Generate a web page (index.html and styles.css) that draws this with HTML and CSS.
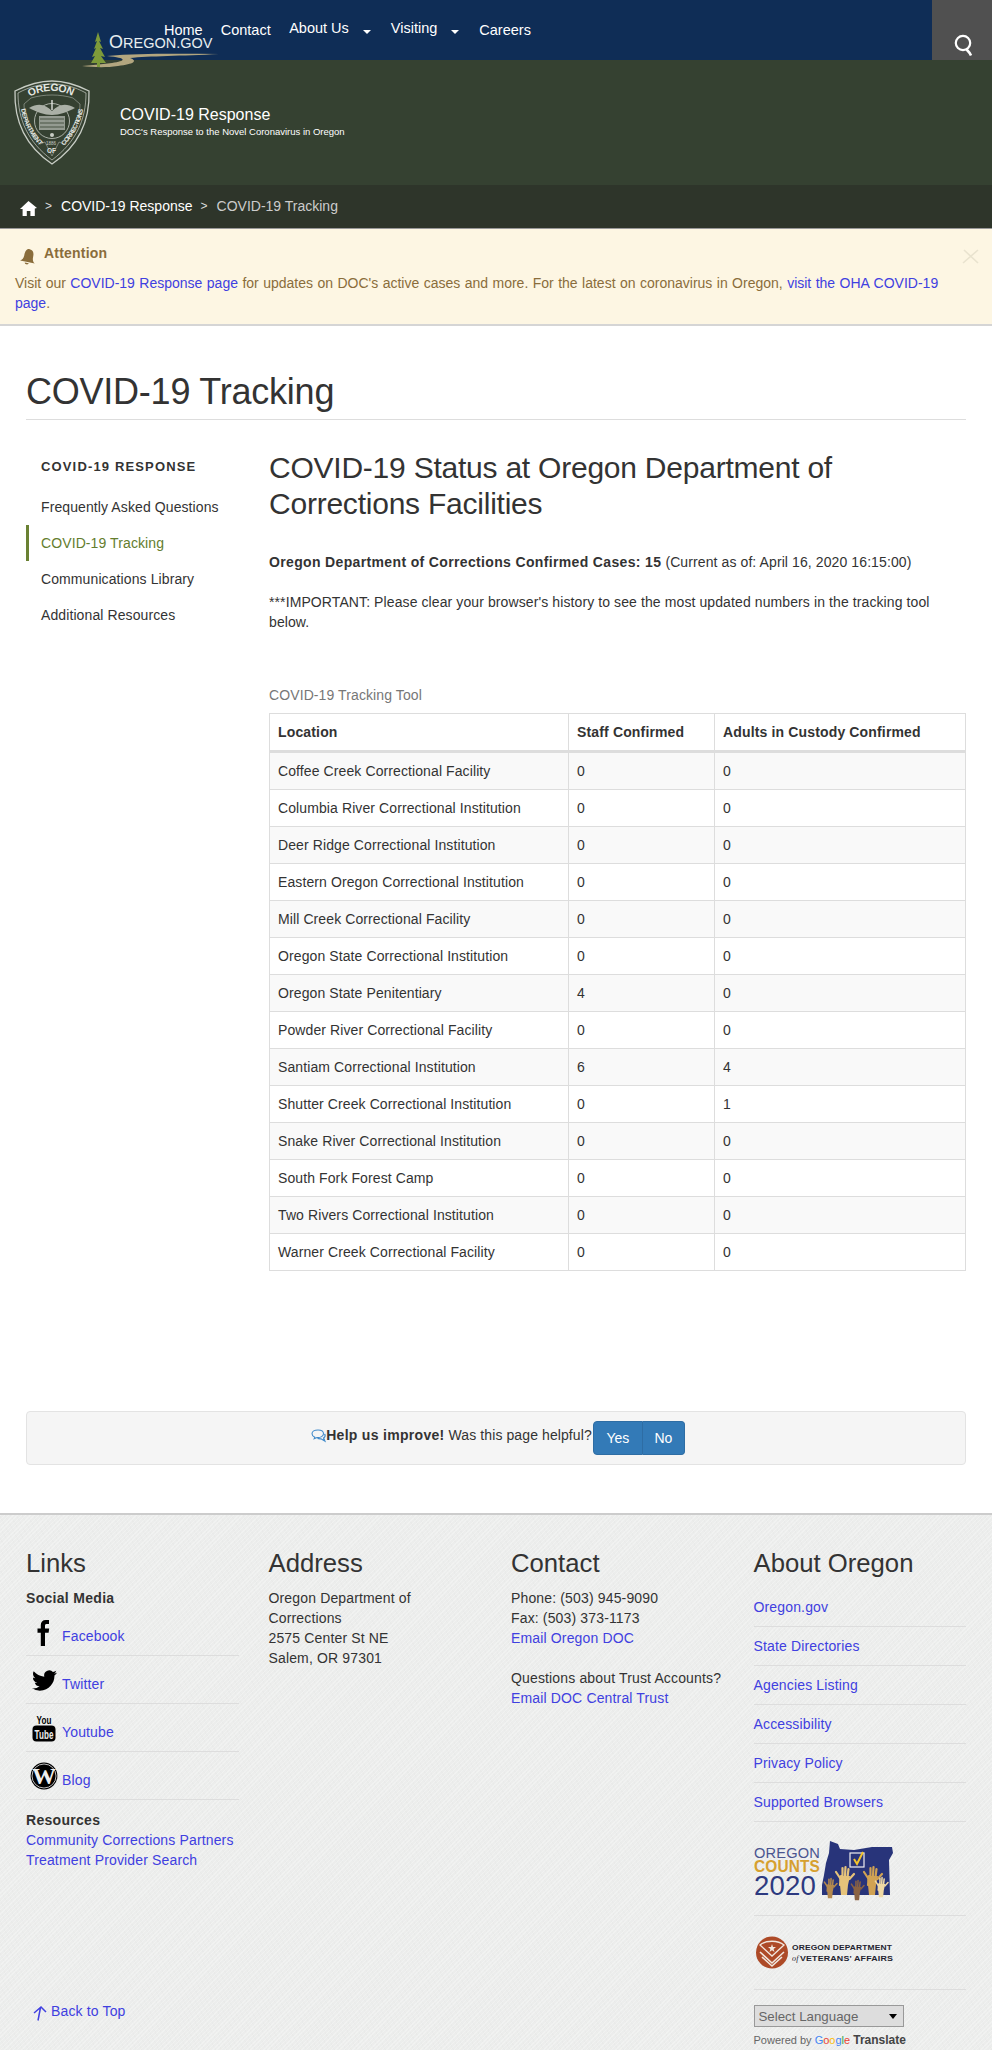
FILE: index.html
```html
<!DOCTYPE html>
<html>
<head>
<title>COVID-19 Tracking</title>
<meta name="viewport" content="width=device-width, initial-scale=1.0">
<link rel="stylesheet" href="styles.css">
</head>
<body>

<header class="topbar">
  <div class="logo">
    <svg class="logo-art" viewBox="0 0 137 36" width="137" height="36">
      <path d="M0 34 C12 33 22 32 30 31 C44 29 46 26 25 24 C60 21 100 22 137 22 C100 24 66 24 48 26 C56 29 52 32 36 34 C22 36 10 35 0 34Z" fill="#b3a67f"/>
      <path d="M16 0 L19 10 L17 9 L21 17 L18 16 L23 25 L19 24 L24 31 L18 31 L18 35 L15 35 L15 31 L9 31 L13 24 L10 25 L14 16 L12 17 L15 9 L13 10Z" fill="#7d9a3a"/>
    </svg>
    <span class="logo-text"><span class="logo-big">O</span>REGON.GOV</span>
  </div>
  <ul class="nav">
    <li class="nav-home"><a href="#">Home</a></li>
    <li class="nav-contact"><a href="#">Contact</a></li>
    <li class="nav-drop nav-about"><a href="#">About Us</a><i class="caret"></i></li>
    <li class="nav-drop nav-visiting"><a href="#">Visiting</a><i class="caret"></i></li>
    <li><a href="#">Careers</a></li>
  </ul>
  <div class="search-btn">
    <svg viewBox="0 0 20 22" width="20" height="22">
      <circle cx="9" cy="9" r="7.200" fill="none" stroke="#fff" stroke-width="2.200"/>
      <path d="M12.500 15.500 C14 17 15.500 18 17 21.500" fill="none" stroke="#fff" stroke-width="2.600"/>
    </svg>
  </div>
</header>

<section class="banner">
  <svg class="seal" viewBox="0 0 76 85" width="76" height="85">
    <defs>
      <path id="arc-top" d="M16 17 C28 9 48 9 60 17"/>
      <path id="arc-left" d="M7 29 C9 42 15 54 26 66"/>
      <path id="arc-right" d="M50 66 C61 54 67 42 69 29"/>
    </defs>
    <path d="M38 1 C51 1 63 5 75 11 C76 40 66 65 38 84 C10 65 0 40 1 11 C13 5 25 1 38 1Z" fill="none" stroke="#c8cdc5" stroke-width="1.300"/>
    <path d="M38 4 C50 4 61 7 72 13 C72 40 62 62 38 80 C14 62 4 40 4 13 C15 7 26 4 38 4Z" fill="none" stroke="#c8cdc5" stroke-width=".7"/>
    <path d="M10 24 L17 18 C30 14 46 14 59 18 L66 24 C66 42 60 54 50 64 L45 62 L38 76 L31 62 L26 64 C16 54 10 42 10 24Z" fill="none" stroke="#aab0a6" stroke-width=".6"/>
    <text class="seal-text seal-big"><textPath href="#arc-top" textLength="44" startOffset="0">OREGON</textPath></text>
    <text class="seal-text"><textPath href="#arc-left" textLength="42">DEPARTMENT</textPath></text>
    <text class="seal-text"><textPath href="#arc-right" textLength="42">CORRECTIONS</textPath></text>
    <text class="seal-text" x="33" y="73">OF</text>
    <text class="seal-year" x="32" y="65">1886</text>
    <circle cx="38" cy="41" r="17.500" fill="none" stroke="#c8cdc5" stroke-width=".8"/>
    <path d="M15 28 C25 22 32 25 38 31 C44 25 51 22 61 28 C53 32 46 35 38 35 C30 35 23 32 15 28Z" fill="#aab0a6"/>
    <rect x="25" y="36" width="26" height="14" fill="#c8cdc5" opacity=".65"/>
    <path d="M26 39 H50 M26 43 H50 M26 47 H50" stroke="#354131" stroke-width=".8"/>
    <path d="M38 20 V30" stroke="#dfe2dd" stroke-width="1.400"/>
    <circle cx="38" cy="55" r="2" fill="#c8cdc5"/>
  </svg>
  <div class="banner-text">
    <div class="banner-title">COVID-19 Response</div>
    <div class="banner-sub">DOC's Response to the Novel Coronavirus in Oregon</div>
  </div>
</section>

<nav class="crumbs">
  <svg class="home-icon" viewBox="0 0 17 15" width="17" height="15">
    <path d="M8.500 0 L17 7 L14.800 7.400 L14.800 15 L10.400 15 L10.400 10 L6.800 10 L6.800 15 L2.600 15 L2.600 8 L0 8Z" fill="#fff"/>
  </svg>
  <span class="crumb-sep">&gt;</span>
  <a class="crumb-link" href="#">COVID-19 Response</a>
  <span class="crumb-sep">&gt;</span>
  <span class="crumb-now">COVID-19 Tracking</span>
</nav>

<section class="alert">
  <span class="alert-close">
    <svg viewBox="0 0 17 15" width="17" height="15"><path d="M1 14 L16 1 M2 1 L16 14" stroke="#e9e3cf" stroke-width="1.600"/></svg>
  </span>
  <div class="alert-head">
    <svg viewBox="0 0 16 18" width="16" height="18">
      <g transform="rotate(12 8 9)"><path d="M8 1 C12 1 13 4 13 8 C13 11 14 13 16 14 L1 14 C3 13 4 11 4 8 C4 4 5 1 8 1Z M6 15 H10 C10 17 6 17 6 15Z" fill="#8a6d3b"/></g>
    </svg>
    <strong>Attention</strong>
  </div>
  <p>Visit our <a href="#">COVID-19 Response page</a> for updates on DOC's active cases and more. For the latest on coronavirus in Oregon, <a href="#">visit the OHA COVID-19 page</a>.</p>
</section>

<main class="page">
  <h1 class="page-title">COVID-19 Tracking</h1>
  <div class="layout">
    <aside class="side">
      <h4>COVID-19 Response</h4>
      <ul>
        <li><a href="#">Frequently Asked Questions</a></li>
        <li class="active"><a href="#">COVID-19 Tracking</a></li>
        <li><a href="#">Communications Library</a></li>
        <li><a href="#">Additional Resources</a></li>
      </ul>
    </aside>
    <article class="content">
      <h2>COVID-19 Status at Oregon Department of Corrections Facilities</h2>
      <p class="cases"><strong>Oregon Department of Corrections Confirmed Cases: 15</strong> (Current as of: April 16, 2020 16:15:00)</p>
      <p class="important">***IMPORTANT: Please clear your browser's history to see the most updated numbers in the tracking tool below.</p>
      <table class="tracker">
        <caption>COVID-19 Tracking Tool</caption>
        <colgroup><col class="col-a"><col class="col-b"><col></colgroup>
        <thead>
          <tr><th>Location</th><th>Staff Confirmed</th><th>Adults in Custody Confirmed</th></tr>
        </thead>
        <tbody>
          <tr><td>Coffee Creek Correctional Facility</td><td>0</td><td>0</td></tr>
          <tr><td>Columbia River Correctional Institution</td><td>0</td><td>0</td></tr>
          <tr><td>Deer Ridge Correctional Institution</td><td>0</td><td>0</td></tr>
          <tr><td>Eastern Oregon Correctional Institution</td><td>0</td><td>0</td></tr>
          <tr><td>Mill Creek Correctional Facility</td><td>0</td><td>0</td></tr>
          <tr><td>Oregon State Correctional Institution</td><td>0</td><td>0</td></tr>
          <tr><td>Oregon State Penitentiary</td><td>4</td><td>0</td></tr>
          <tr><td>Powder River Correctional Facility</td><td>0</td><td>0</td></tr>
          <tr><td>Santiam Correctional Institution</td><td>6</td><td>4</td></tr>
          <tr><td>Shutter Creek Correctional Institution</td><td>0</td><td>1</td></tr>
          <tr><td>Snake River Correctional Institution</td><td>0</td><td>0</td></tr>
          <tr><td>South Fork Forest Camp</td><td>0</td><td>0</td></tr>
          <tr><td>Two Rivers Correctional Institution</td><td>0</td><td>0</td></tr>
          <tr><td>Warner Creek Correctional Facility</td><td>0</td><td>0</td></tr>
        </tbody>
      </table>
    </article>
  </div>

  <div class="feedback">
    <svg class="chat-icon" viewBox="0 0 15 13" width="15" height="13">
      <path d="M7 1 C3.500 1 1 2.600 1 4.800 C1 6.400 2.200 7.500 3.800 8.200 L3.200 9.800 L6 8.600 C9.800 8.800 12.500 7 12.500 4.800 C12.500 2.600 10.300 1 7 1Z" fill="none" stroke="#428bca" stroke-width="1.100"/>
      <path d="M13.500 5 C14.600 6.400 14.200 8 12.600 9 L13.800 12 L10 9.800 C8.600 9.900 7.600 9.800 6.600 9.400" fill="none" stroke="#428bca" stroke-width="1.300"/>
    </svg>
    <span class="feedback-text"><strong>Help us improve!</strong> Was this page helpful?</span>
    <div class="btn-group">
      <button class="btn btn-yes">Yes</button><button class="btn btn-no">No</button>
    </div>
  </div>
</main>

<footer class="footer">
  <div class="footer-col">
    <h3>Links</h3>
    <strong class="foot-label">Social Media</strong>
    <ul class="social">
      <li>
        <span class="social-icon">
          <svg viewBox="0 0 28 28" width="28" height="28"><path d="M19 2 H15.800 C12.600 2 10.800 4 10.800 7.200 V10.500 H7.500 V14.800 H10.800 V28 H15 V14.800 H18.600 L19.200 10.500 H15 V7.600 C15 6.500 15.500 6 16.600 6 H19Z" fill="#000"/></svg>
        </span>
        <a href="#">Facebook</a>
      </li>
      <li>
        <span class="social-icon">
          <svg viewBox="0 0 24 24" width="25" height="25"><path d="M23.953 4.570a10 10 0 01-2.825.775 4.958 4.958 0 002.163-2.723c-.951.555-2.005.959-3.127 1.184a4.920 4.920 0 00-8.384 4.482C7.690 8.095 4.067 6.130 1.640 3.162a4.822 4.822 0 00-.666 2.475c0 1.710.870 3.213 2.188 4.096a4.904 4.904 0 01-2.228-.616v.060a4.923 4.923 0 003.946 4.827 4.996 4.996 0 01-2.212.085 4.936 4.936 0 004.604 3.417 9.867 9.867 0 01-6.102 2.105c-.390 0-.779-.023-1.170-.067a13.995 13.995 0 007.557 2.209c9.053 0 13.998-7.496 13.998-13.985 0-.210 0-.420-.015-.630A9.935 9.935 0 0024 4.590z" fill="#000"/></svg>
        </span>
        <a href="#">Twitter</a>
      </li>
      <li>
        <span class="social-icon">
          <svg viewBox="0 0 28 30" width="28" height="30">
            <text class="yt-you" x="14" y="11" text-anchor="middle" textLength="15" lengthAdjust="spacingAndGlyphs">You</text>
            <rect x="2.500" y="12.500" width="23" height="16" rx="4" fill="#000"/>
            <text class="yt-tube" x="14" y="25.500" text-anchor="middle" textLength="19" lengthAdjust="spacingAndGlyphs">Tube</text>
          </svg>
        </span>
        <a href="#">Youtube</a>
      </li>
      <li>
        <span class="social-icon">
          <svg viewBox="0 0 28 28" width="28" height="28">
            <circle cx="14" cy="14" r="13.400" fill="#000"/>
            <circle cx="14" cy="14" r="12" fill="none" stroke="#eee" stroke-width=".8"/>
            <text class="wp-w" x="14" y="22" text-anchor="middle">W</text>
          </svg>
        </span>
        <a href="#">Blog</a>
      </li>
    </ul>
    <strong class="foot-label res-label">Resources</strong>
    <a class="foot-link" href="#">Community Corrections Partners</a>
    <a class="foot-link" href="#">Treatment Provider Search</a>
    <a class="back-top" href="#">
      <svg viewBox="0 0 14 15" width="14" height="15"><path d="M1 7 L8 1 L13 6 M7.500 1.500 L5 14.500" fill="none" stroke="#4040e0" stroke-width="1.500"/></svg>
      Back to Top
    </a>
  </div>

  <div class="footer-col">
    <h3>Address</h3>
    <div>Oregon Department of Corrections<br>2575 Center St NE<br>Salem, OR 97301</div>
  </div>

  <div class="footer-col">
    <h3>Contact</h3>
    <div>Phone: (503) 945-9090<br>Fax: (503) 373-1173<br><a href="#">Email Oregon DOC</a></div>
    <div class="trust">Questions about Trust Accounts?<br><a href="#">Email DOC Central Trust</a></div>
  </div>

  <div class="footer-col">
    <h3>About Oregon</h3>
    <ul class="about-list">
      <li><a href="#">Oregon.gov</a></li>
      <li><a href="#">State Directories</a></li>
      <li><a href="#">Agencies Listing</a></li>
      <li><a href="#">Accessibility</a></li>
      <li><a href="#">Privacy Policy</a></li>
      <li><a href="#">Supported Browsers</a></li>
    </ul>
    <div class="badge-row counts">
      <svg viewBox="0 0 140 55" width="140" height="55">
        <defs>
          <g id="hand">
            <path d="M-4 6 L-3 -3 M-1.500 -3 L-1.500 -11 M1 -3 L1.500 -12 M3.500 -2 L4.500 -10 M5.500 0 L10 -5 M-4 -1 L-8 -7" fill="none" stroke-linecap="round" stroke-width="2.200"/>
            <path d="M-5 -3 H6 L4 6 L3 16 H-3 L-4 6Z" stroke="none"/>
          </g>
        </defs>
        <text class="counts-t1" x="0" y="17" textLength="66" lengthAdjust="spacingAndGlyphs">OREGON</text>
        <text class="counts-t2" x="0" y="31" textLength="66" lengthAdjust="spacingAndGlyphs">COUNTS</text>
        <text class="counts-t3" x="0" y="54" textLength="62" lengthAdjust="spacingAndGlyphs">2020</text>
        <path d="M76 0 L84 3 L86 8 L100 9 L118 6 L138 6 L139 12 L135 19 L136 54 L68 54 L68 44 L70 34 L72 22 L75 12Z" fill="#28347a"/>
        <rect x="96" y="12" width="14" height="14" fill="none" stroke="#eee" stroke-width="1.200"/>
        <path d="M100 18 L103 23 L109 11" fill="none" stroke="#f2c32c" stroke-width="2"/>
        <use href="#hand" transform="translate(90 38)" fill="#e6c37a" stroke="#e6c37a"/>
        <use href="#hand" transform="translate(118 38)" fill="#d1a253" stroke="#d1a253"/>
        <use href="#hand" transform="translate(76 46) scale(.7)" fill="#b58a4e" stroke="#b58a4e"/>
        <use href="#hand" transform="translate(103 48) scale(.7)" fill="#8a6242" stroke="#8a6242"/>
        <use href="#hand" transform="translate(127 45) scale(.7)" fill="#f0d9a4" stroke="#f0d9a4"/>
      </svg>
    </div>
    <div class="badge-row vets">
      <svg viewBox="0 0 137 33" width="137" height="33">
        <circle cx="16" cy="16.500" r="16" fill="#ad4a27"/>
        <path d="M4 9 C10 4 22 4 28 9 L16 20Z" fill="none" stroke="#f1e7de" stroke-width="1.300"/>
        <path d="M16 8 L17 11 L20 11 L17.600 13 L18.500 16 L16 14.200 L13.500 16 L14.400 13 L12 11 L15 11Z" fill="#f1e7de"/>
        <path d="M4 16 L16 27 L28 16 M6 21 L16 30 L26 21" fill="none" stroke="#f1e7de" stroke-width="1.600"/>
        <text class="vets-t" x="36" y="14" textLength="100" lengthAdjust="spacingAndGlyphs">OREGON DEPARTMENT</text>
        <text class="vets-of" x="36" y="25">of</text>
        <text class="vets-t" x="44" y="25" textLength="93" lengthAdjust="spacingAndGlyphs">VETERANS' AFFAIRS</text>
      </svg>
    </div>
    <div class="lang-wrap">
      <select class="lang"><option>Select Language</option></select>
    </div>
    <div class="powered">Powered by <span class="g-b">G</span><span class="g-r">o</span><span class="g-y">o</span><span class="g-b">g</span><span class="g-g">l</span><span class="g-r">e</span> <b>Translate</b></div>
  </div>
</footer>

</body>
</html>
```

FILE: styles.css
```css
* {
  box-sizing: border-box;
}

body {
  margin: 0;
  font-family: "Liberation Sans", Arial, sans-serif;
  font-size: 14px;
  line-height: 20px;
  letter-spacing: .1px;
  color: #333;
  background: #fff;
}

a {
  color: #4040e0;
  text-decoration: none;
}

ul {
  list-style: none;
  margin: 0;
  padding: 0;
}

strong {
  letter-spacing: .3px;
}

svg {
  overflow: visible;
}

/* top bar */
.topbar {
  position: relative;
  display: flex;
  justify-content: space-between;
  height: 60px;
  letter-spacing: 0;
  background: #0f2d56;
}

.logo {
  position: absolute;
  left: 82px;
  top: 32px;
  width: 137px;
  height: 36px;
  z-index: 2;
}

.logo-art {
  display: block;
}

.logo-text {
  position: absolute;
  left: 27px;
  top: 2px;
  color: #e8eef0;
  font-size: 14.5px;
  line-height: 16px;
  white-space: nowrap;
}

.logo-big {
  font-size: 18px;
}

.nav {
  display: flex;
  padding: 20px 0 0 164px;
  font-size: 14.5px;
}

.nav a {
  color: #fff;
}

.nav-home {
  margin-right: 18px;
}

.nav-contact {
  margin-right: 18.5px;
}

.nav-drop {
  margin-top: -2px;
}

.nav-about {
  margin-right: 20px;
}

.nav-visiting {
  margin-right: 20px;
}

.caret {
  display: inline-block;
  margin-left: 14px;
  vertical-align: -1px;
  border-top: 4px solid #fff;
  border-left: 4px solid transparent;
  border-right: 4px solid transparent;
}

.search-btn {
  display: flex;
  justify-content: center;
  align-items: flex-end;
  width: 60px;
  height: 60px;
  padding: 0 0 4px 4px;
  background: #505050;
}

/* section banner */
.banner {
  display: flex;
  align-items: center;
  height: 125px;
  padding: 0 14px;
  letter-spacing: 0;
  background: #354131;
}

.seal-text {
  fill: #e4e7e2;
  font-size: 6.5px;
  font-weight: bold;
}

.seal-big {
  font-size: 10.5px;
}

.seal-year {
  fill: #c8cdc5;
  font-size: 4.5px;
}

.banner-text {
  margin: -2px 0 0 30px;
  color: #fff;
}

.banner-title {
  font-size: 16px;
  line-height: 20px;
}

.banner-sub {
  font-size: 9.5px;
  line-height: 14px;
}

.crumbs {
  display: flex;
  align-items: center;
  height: 44px;
  padding: 0 0 1px 20px;
  letter-spacing: 0;
  background: #2e352a;
  border-bottom: 1px solid #999;
}

.home-icon {
  margin-top: 4px;
}

.crumb-sep {
  margin: 0 9px 0 8px;
  color: #ddd;
  font-size: 12px;
}

.crumb-link {
  color: #fff;
}

.crumb-now {
  color: #ccc;
}

/* alert */
.alert {
  position: relative;
  height: 97px;
  padding: 14px 40px 0 15px;
  background: #fdf6e3;
  border-bottom: 2px solid #d5d5d5;
  color: #8a6d3b;
}

.alert p {
  margin: 7px 0 0;
  letter-spacing: 0;
  word-spacing: .55px;
}

.alert-head {
  display: flex;
  align-items: flex-start;
  gap: 8px;
  padding-left: 5px;
}

.alert-head strong {
  letter-spacing: .2px;
}

.alert-head svg {
  margin-top: 5px;
}

.alert-close {
  position: absolute;
  top: 20px;
  right: 13px;
}

/* main */
.page {
  padding: 46px 26px 0;
}

.page-title {
  margin: 0;
  padding-bottom: 7px;
  font-size: 36px;
  font-weight: normal;
  line-height: 40px;
  letter-spacing: -.23px;
  border-bottom: 1px solid #ddd;
}

.layout {
  display: grid;
  grid-template-columns: 213px 1fr;
  column-gap: 30px;
  margin-top: 29px;
}

.side h4 {
  margin: 8px 0 0;
  padding-left: 15px;
  font-size: 13px;
  font-weight: bold;
  line-height: 20px;
  letter-spacing: 1.15px;
  text-transform: uppercase;
}

.side ul {
  margin-top: 12px;
}

.side li {
  height: 36px;
  padding: 8px 0 0 12px;
  border-left: 3px solid transparent;
}

.side a {
  color: #333;
}

.side li.active {
  border-left-color: #6a8133;
}

.side li.active a {
  color: #647d2e;
}

.content h2 {
  margin: 1px 0 0;
  font-size: 30px;
  font-weight: normal;
  line-height: 36px;
  letter-spacing: -.23px;
}

.cases {
  margin: 30px 0 0;
}

.cases strong {
  letter-spacing: .35px;
}

.important {
  margin: 20px 0 0;
}

.tracker {
  width: 100%;
  margin-top: 53px;
  border-collapse: collapse;
  table-layout: fixed;
  border: 1px solid #ddd;
}

.tracker caption {
  padding-bottom: 8px;
  color: #777;
  text-align: left;
}

.col-a {
  width: 299px;
}

.col-b {
  width: 146px;
}

.tracker th,
.tracker td {
  padding: 8px;
  text-align: left;
  border: 1px solid #ddd;
}

.tracker th {
  letter-spacing: .15px;
  border-bottom-width: 3px;
}

.tracker tbody tr:nth-child(odd) {
  background: #f9f9f9;
}

.feedback {
  display: flex;
  justify-content: center;
  height: 54px;
  margin-top: 140px;
  padding: 9px 0 0 4px;
  background: #f5f5f5;
  border: 1px solid #e3e3e3;
  border-radius: 4px;
}

.chat-icon {
  margin: 8px 0 0 0;
}

.feedback-text {
  padding-top: 4px;
  white-space: nowrap;
}

.btn-group {
  display: flex;
  margin-left: 1px;
}

.btn {
  height: 34px;
  padding: 0;
  color: #fff;
  font-family: inherit;
  font-size: 14px;
  background: #337ab7;
  border: 1px solid #2e6da4;
}

.btn-yes {
  width: 50px;
  border-radius: 4px 0 0 4px;
}

.btn-no {
  width: 42px;
  border-left: 0;
  border-radius: 0 4px 4px 0;
}

/* footer */
.footer {
  display: grid;
  grid-template-columns: repeat(4, 1fr);
  column-gap: 30px;
  height: 537px;
  margin-top: 48px;
  padding: 34px 26px 0;
  letter-spacing: .15px;
  border-top: 2px solid #ccc;
  background-color: #ecedec;
  background-image:
    repeating-linear-gradient(135deg, rgba(255,255,255,.28) 0 1px, transparent 1px 3px),
    repeating-linear-gradient(62deg, rgba(0,0,0,.012) 0 1px, transparent 1px 5px);
}

.footer h3 {
  margin: 0 0 11px;
  font-size: 25.7px;
  font-weight: normal;
  line-height: 28px;
  letter-spacing: 0;
}

.foot-label {
  display: block;
}

.social li {
  display: flex;
  align-items: flex-end;
  gap: 4px;
  height: 48px;
  padding: 9px 0 9px 4px;
  border-bottom: 1px solid #ddd;
}

.social-icon {
  display: flex;
  justify-content: center;
  align-items: center;
  width: 28px;
  height: 28px;
}

.yt-you {
  font: bold 11px "Liberation Sans", sans-serif;
  fill: #000;
}

.yt-tube {
  font: bold 12px "Liberation Sans", sans-serif;
  fill: #eee;
}

.wp-w {
  font: bold 24px "Liberation Serif", serif;
  fill: #eee;
}

.res-label {
  margin-top: 10px;
}

.foot-link {
  display: block;
}

.back-top {
  display: flex;
  align-items: center;
  gap: 4px;
  margin: 131px 0 0 7px;
}

.back-top svg {
  margin-top: 5px;
}

.trust {
  margin-top: 20px;
}

.about-list li {
  height: 39px;
  padding-top: 9px;
  border-bottom: 1px solid #ddd;
}

.badge-row {
  border-bottom: 1px solid #ddd;
}

.badge-row svg {
  display: block;
}

.counts {
  height: 94px;
  padding-top: 19px;
}

.counts-t1 {
  font: 14px "Liberation Sans", sans-serif;
  fill: #4a5590;
}

.counts-t2 {
  font: bold 16px "Liberation Sans", sans-serif;
  fill: #d6a02f;
}

.counts-t3 {
  font: 28px "Liberation Sans", sans-serif;
  fill: #2d3a80;
}

.vets {
  height: 74px;
  padding: 20px 0 0 2px;
}

.vets-t {
  font: bold 8px "Liberation Sans", sans-serif;
  fill: #23232f;
}

.vets-of {
  font: italic 8px "Liberation Serif", serif;
  fill: #23232f;
}

.lang-wrap {
  position: relative;
  width: 150px;
  margin-top: 15px;
}

.lang-wrap::after {
  content: "";
  position: absolute;
  top: 9px;
  right: 7px;
  border-top: 5px solid #000;
  border-left: 4px solid transparent;
  border-right: 4px solid transparent;
}

.lang {
  display: block;
  width: 150px;
  height: 22px;
  padding: 0 4px;
  color: #666;
  font-family: inherit;
  font-size: 13.3px;
  background: #ddd;
  border: 1px solid #999;
  border-radius: 0;
  appearance: none;
}

.powered {
  margin-top: 5px;
  color: #666;
  font-size: 11px;
  letter-spacing: 0;
  line-height: 16px;
}

.powered b {
  color: #444;
  font-size: 12px;
}

.g-b { color: #4285f4; }
.g-r { color: #ea4335; }
.g-y { color: #fbbc05; }
.g-g { color: #34a853; }
```
